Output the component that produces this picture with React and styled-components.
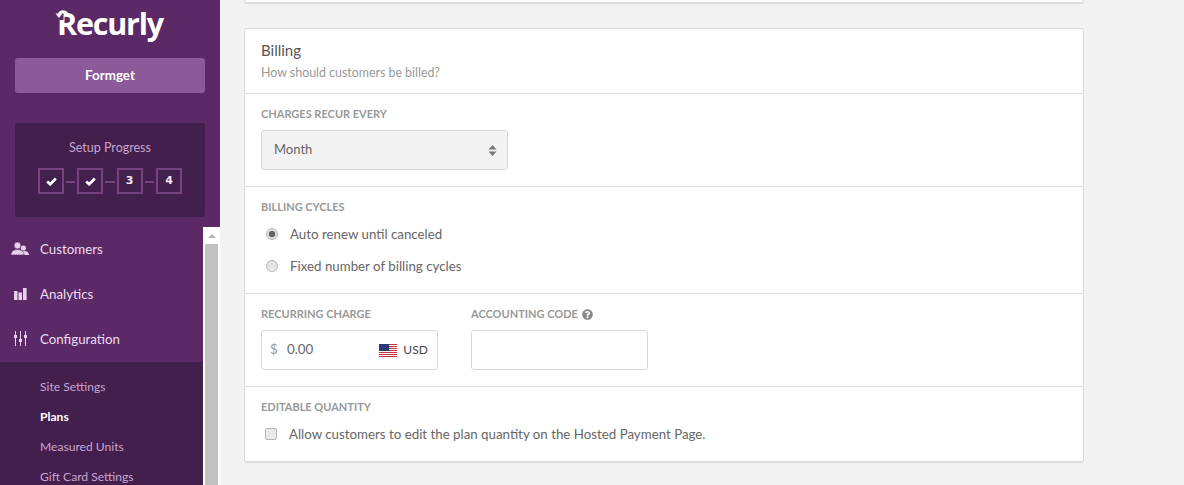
import React from 'react'
import styled, { createGlobalStyle } from 'styled-components'
import { FaQuestionCircle } from 'react-icons/fa'

const Global = createGlobalStyle`
  html, body {
    margin: 0;
    padding: 0;
    height: 100%;
    overflow: hidden;
  }
  body {
    background: #f2f2f2;
    font-family: "Lato", "Open Sans", sans-serif;
    color: #555;
  }
  * { box-sizing: border-box; }
`

const Page = styled.div`
  display: flex;
  height: 485px;
  overflow: hidden;
`

const Sidebar = styled.aside`
  width: 220px;
  flex: none;
  background: #5b2966;
  display: flex;
  flex-direction: column;
`

const Brand = styled.div`
  height: 58px;
  padding-top: 3px;
  display: flex;
  justify-content: center;
`

const Logo = styled.div`
  position: relative;
  font-family: "Open Sans", sans-serif;
  font-weight: 700;
  font-size: 30.5px;
  line-height: 40px;
  height: 40px;
  color: #fff;
  letter-spacing: -1.2px;

  svg {
    position: absolute;
    left: -2px;
    top: 7px;
  }
`

const AccountButton = styled.div`
  margin: 0 15px;
  height: 35px;
  border-radius: 3px;
  background: #8c5a98;
  color: #fff;
  font-size: 13.4px;
  font-weight: 700;
  padding-bottom: 2px;
  display: flex;
  align-items: center;
  justify-content: center;
`

const Progress = styled.div`
  margin: 30px 15px 0;
  height: 94px;
  border-radius: 3px;
  background: #421f4c;
  padding-top: 16px;
  text-align: center;
  color: #c9a5d2;
  font-size: 12.5px;
  line-height: 18px;
`

const Steps = styled.div`
  margin-top: 11px;
  display: flex;
  justify-content: center;
  align-items: center;
  gap: 2px;
`

const Step = styled.span`
  width: 26px;
  height: 26px;
  border: 2px solid #754380;
  color: #f2e9f4;
  font-size: 11px;
  font-weight: 700;
  font-family: "DejaVu Sans", sans-serif;
  display: flex;
  align-items: center;
  justify-content: center;
`

const Dash = styled.span`
  width: 9.33px;
  height: 2px;
  background: #754380;
  margin-top: 2px;
`

const NavArea = styled.div`
  flex: 1;
  min-height: 0;
  margin-top: 10px;
  display: flex;
`

const Nav = styled.nav`
  flex: 1;
  min-width: 0;
  overflow: hidden;
`

const NavItem = styled.a`
  display: flex;
  align-items: center;
  height: 45px;
  padding-bottom: 2px;
  color: #ecdcf0;
  font-size: 13.3px;
  font-weight: 400;
`

const NavIcon = styled.span`
  width: 40px;
  padding-left: 11px;
  display: flex;
  color: #e9cfee;
`

const SubNav = styled.div`
  background: #421f4c;
  padding-top: 10px;
`

const SubItem = styled.a`
  display: block;
  height: 30px;
  padding-left: 40px;
  line-height: 29px;
  font-size: 12.1px;
  font-weight: ${p => (p.$active ? 700 : 400)};
  color: ${p => (p.$active ? '#fff' : '#c9a5d2')};
`

const Scrollbar = styled.div`
  width: 17px;
  flex: none;
  background: #fff;
  padding: 0 2px;
  display: flex;
  flex-direction: column;
`

const ScrollArrow = styled.div`
  height: 17px;
  display: flex;
  align-items: center;
  justify-content: center;

  &::before {
    content: '';
    border-left: 4px solid transparent;
    border-right: 4px solid transparent;
    border-bottom: 4px solid #b5b5b5;
  }
`

const ScrollThumb = styled.div`
  flex: 1;
  background: #c1c1c1;
`

const Main = styled.main`
  flex: 1;
  padding-left: 24px;
`

const Column = styled.div`
  width: 840px;
`

const CardStub = styled.div`
  height: 4px;
  background: #fff;
  border: 1px solid #dcdcdc;
  border-top: 0;
  border-bottom-width: 2px;
  border-radius: 0 0 3px 3px;
  margin-bottom: 24px;
`

const Card = styled.section`
  background: #fff;
  border: 1px solid #dcdcdc;
  border-bottom-width: 2px;
  border-radius: 3px;
`

const Row = styled.div`
  padding: 12px 16px 0;
  height: ${p => p.$h}px;
  border-bottom: ${p => (p.$last ? 0 : '1px solid #dedede')};
`

const Title = styled.h3`
  margin: 0;
  font-size: 15px;
  line-height: 19px;
  font-weight: 400;
  color: #555;
`

const Subtitle = styled.p`
  margin: 5px 0 0;
  font-size: 12.4px;
  line-height: 16px;
  color: #999;
`

const Label = styled.label`
  display: flex;
  align-items: center;
  gap: 4px;
  font-size: 11px;
  line-height: 16px;
  font-weight: 700;
  color: #999;
  text-transform: uppercase;
`

const SelectBox = styled.div`
  margin-top: 8px;
  width: 247px;
  height: 40px;
  background: #f2f2f2;
  border: 1px solid #d8d8d8;
  border-radius: 3px;
  padding: 0 10px 2px 12px;
  display: flex;
  align-items: center;
  justify-content: space-between;
  font-size: 13px;
  color: #666;

  svg {
    margin-top: 3px;
  }
`

const RadioGroup = styled.div`
  padding-top: 3px;
`

const RadioRow = styled.div`
  display: flex;
  align-items: center;
  height: 32px;
  padding-left: 5px;
  gap: 12px;
  font-size: 13.3px;
  color: #666;
`

const Radio = styled.span`
  width: 12px;
  height: 12px;
  border-radius: 50%;
  border: 1px solid #b8b8b8;
  background: ${p => (p.$on
    ? 'radial-gradient(circle, #666 0 3px, #e4e4e4 3.6px)'
    : 'linear-gradient(#dcdcdc, #eee)')};
`

const Fields = styled.div`
  display: flex;
  gap: 33px;
`

const Input = styled.div`
  margin-top: 8px;
  width: ${p => p.$w}px;
  height: 40px;
  border: 1px solid #d8d8d8;
  border-radius: 3px;
  display: flex;
  align-items: center;
  padding: 0 9px 2px 8px;
  font-size: 13.3px;
  color: #666;

  svg {
    margin-top: 2px;
  }
`

const Dollar = styled.span`
  color: #999;
  width: 17px;
`

const Amount = styled.span`
  flex: 1;
`

const Currency = styled.span`
  margin-left: 6px;
  color: #444;
  font-size: 12px;
  letter-spacing: 0.1px;
`

const CheckRow = styled.div`
  display: flex;
  align-items: center;
  gap: 12px;
  margin-top: 9px;
  height: 20px;
  padding-left: 4px;
  font-size: 13.3px;
  color: #666;
`

const Checkbox = styled.span`
  width: 12px;
  height: 12px;
  border: 1px solid #b8b8b8;
  border-radius: 2px;
  background: #eaeaea;
`

const SelectArrows = () => (
  <svg width="9" height="11" viewBox="0 0 9 11">
    <path d="M4.5 0 L8.5 4.5 H0.5 Z M0.5 6.5 H8.5 L4.5 11 Z" fill="#777" />
  </svg>
)

const Flag = () => (
  <svg width="18" height="13" viewBox="0 0 18 13">
    <rect width="18" height="13" fill="#fff" />
    {[0, 2, 4, 6, 8, 10, 12].map(y => (
      <rect key={y} y={y} width="18" height="1" fill="#c5303c" />
    ))}
    <rect width="10" height="7" fill="#2b3a75" />
  </svg>
)

const LogoCurl = () => (
  <svg width="13" height="11" viewBox="0 0 13 11">
    <rect x="0" y="0" width="8.5" height="10" fill="#5b2966" />
    <path d="M12 3.5 C9 1 6 1.2 4 4" fill="none" stroke="#fff" strokeWidth="3" />
    <path d="M0.5 3.5 H7.5 L4 8 Z" fill="#fff" />
  </svg>
)

const StepCheck = () => (
  <svg width="11" height="9" viewBox="0 0 11 9">
    <path d="M1.2 4.4 L4.2 7.2 L9.8 1.6" fill="none" stroke="#fff" strokeWidth="2.8" />
  </svg>
)

const CustomersIcon = () => (
  <svg width="18" height="13" viewBox="0 0 18 13" fill="currentColor">
    <circle cx="12.4" cy="6" r="2.6" />
    <path d="M12 9 C15.5 8.6 18 10 18 13 H12 Z" />
    <circle cx="6.5" cy="3.5" r="3.4" stroke="#5b2966" strokeWidth="0.6" />
    <path d="M0 13 C0 9 3 7.5 6.5 7.5 S13 9 13 13 Z" stroke="#5b2966" strokeWidth="0.6" />
  </svg>
)

const AnalyticsIcon = () => (
  <svg width="18" height="12" viewBox="0 0 18 12" fill="currentColor">
    <rect x="3" y="3" width="3.5" height="9" />
    <rect x="7.5" y="4.5" width="3.5" height="7.5" />
    <rect x="12" y="0" width="3.6" height="12" />
  </svg>
)

const ConfigIcon = () => (
  <svg width="18" height="15" viewBox="0 0 18 15" fill="currentColor">
    <rect x="4" width="1" height="15" />
    <rect x="9" width="1" height="15" />
    <rect x="14" width="1" height="15" />
    <rect x="3" y="4" width="3" height="3" />
    <rect x="8" y="8" width="3" height="3" />
    <rect x="13" y="4" width="3" height="3" />
  </svg>
)

const App = () => {
  return (
    <Page>
      <Global />
      <Sidebar>
        <Brand>
          <Logo>
            Recurly
            <LogoCurl />
          </Logo>
        </Brand>
        <AccountButton>Formget</AccountButton>
        <Progress>
          Setup Progress
          <Steps>
            <Step><StepCheck /></Step>
            <Dash />
            <Step><StepCheck /></Step>
            <Dash />
            <Step>3</Step>
            <Dash />
            <Step>4</Step>
          </Steps>
        </Progress>
        <NavArea>
          <Nav>
            <NavItem><NavIcon><CustomersIcon /></NavIcon>Customers</NavItem>
            <NavItem><NavIcon><AnalyticsIcon /></NavIcon>Analytics</NavItem>
            <NavItem><NavIcon><ConfigIcon /></NavIcon>Configuration</NavItem>
            <SubNav>
              <SubItem>Site Settings</SubItem>
              <SubItem $active>Plans</SubItem>
              <SubItem>Measured Units</SubItem>
              <SubItem>Gift Card Settings</SubItem>
            </SubNav>
          </Nav>
          <Scrollbar>
            <ScrollArrow />
            <ScrollThumb />
          </Scrollbar>
        </NavArea>
      </Sidebar>
      <Main>
        <Column>
          <CardStub />
          <Card>
            <Row $h={65}>
              <Title>Billing</Title>
              <Subtitle>How should customers be billed?</Subtitle>
            </Row>
            <Row $h={93}>
              <Label>Charges recur every</Label>
              <SelectBox>Month<SelectArrows /></SelectBox>
            </Row>
            <Row $h={107}>
              <Label>Billing cycles</Label>
              <RadioGroup>
                <RadioRow><Radio $on />Auto renew until canceled</RadioRow>
                <RadioRow><Radio />Fixed number of billing cycles</RadioRow>
              </RadioGroup>
            </Row>
            <Row $h={93}>
              <Fields>
                <div>
                  <Label>Recurring charge</Label>
                  <Input $w={177}>
                    <Dollar>$</Dollar>
                    <Amount>0.00</Amount>
                    <Flag />
                    <Currency>USD</Currency>
                  </Input>
                </div>
                <div>
                  <Label>Accounting code <FaQuestionCircle size={11} color="#888" /></Label>
                  <Input $w={177} />
                </div>
              </Fields>
            </Row>
            <Row $h={74} $last>
              <Label>Editable quantity</Label>
              <CheckRow><Checkbox />Allow customers to edit the plan quantity on the Hosted Payment Page.</CheckRow>
            </Row>
          </Card>
        </Column>
      </Main>
    </Page>
  )
}

export default App
